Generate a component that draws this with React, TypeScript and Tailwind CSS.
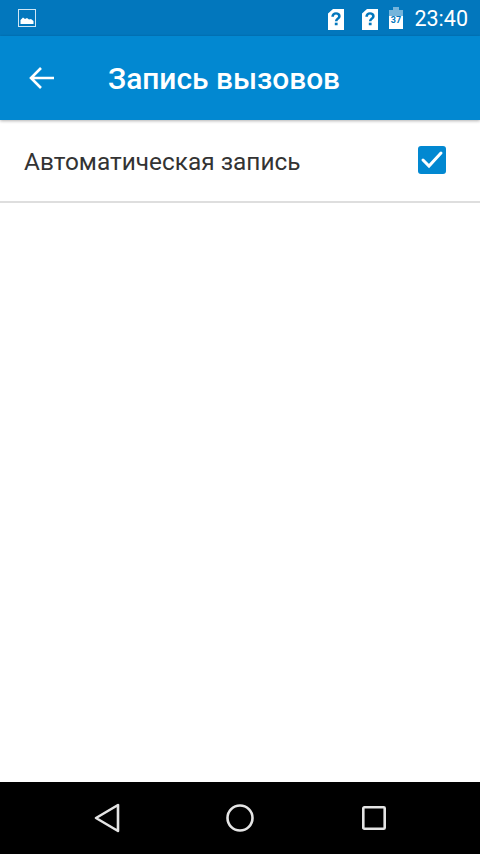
import React from "react";

function SimIcon() {
    return (
        <svg width="16" height="21" viewBox="0 0 16 23" preserveAspectRatio="none">
            <path d="M5 0H16V23H0V5Z" fill="#fff" />
            <path
                d="M4.6 8.4C4.6 6.2 6 4.8 8 4.8s3.4 1.4 3.4 3.2c0 2.6-3.2 2.6-3.2 5.4"
                fill="none"
                stroke="#0277bd"
                strokeWidth="2.6"
            />
            <rect x="6.8" y="15" width="2.8" height="2.8" fill="#0277bd" />
        </svg>
    );
}

function StatusBar() {
    return (
        <div className="h-9 bg-[#0277bd] flex items-center pl-[18px] pr-3 shrink-0">
            <svg width="18" height="18" viewBox="0 0 18 18">
                <rect x="0.5" y="0.5" width="17" height="17" fill="none" stroke="#cfe6f5" />
                <path d="M2.5 15V11L5 8.5L7 10L9 9L11 10.5L13 10L15.5 12V15Z" fill="#fff" />
            </svg>
            <div className="ml-auto flex items-center">
                <div className="mt-0.5 flex">
                    <SimIcon />
                </div>
                <div className="ml-[18px] mt-0.5 flex">
                    <SimIcon />
                </div>
                <svg className="ml-[11px]" width="14" height="22" viewBox="0 0 14 22">
                    <path d="M4 0H10V3H14V22H0V3H4Z" fill="#fff" fillOpacity="0.45" />
                    <path d="M0 9H14V22H0Z" fill="#fff" />
                    <text
                        x="7"
                        y="16"
                        textAnchor="middle"
                        fontSize="9"
                        fontWeight="700"
                        fontFamily="Roboto, sans-serif"
                        fill="#0277bd"
                    >
                        37
                    </text>
                </svg>
                <span className="ml-[11px] mt-0.5 text-[21.5px] leading-none text-white font-['Roboto',sans-serif]">
                    23:40
                </span>
            </div>
        </div>
    );
}

function CheckBox() {
    return (
        <svg width="28" height="28" viewBox="0 0 28 28">
            <rect width="28" height="28" rx="3" fill="#0288d1" />
            <path d="M5 14L11 20L23 7" fill="none" stroke="#fff" strokeWidth="3" strokeLinecap="round" />
        </svg>
    );
}

export default function App() {
    return (
        <div className="h-[854px] flex flex-col bg-white font-['Roboto',sans-serif]">
            <StatusBar />
            <header className="h-[84px] bg-[#0288d1] flex items-center pl-7 shrink-0 shadow-[0_1px_3px_rgba(0,0,0,0.3)] relative">
                <svg width="28" height="28" viewBox="0 0 28 28">
                    <path
                        d="M26 14H3M13 4L3 14L13 24"
                        fill="none"
                        stroke="#fff"
                        strokeWidth="2.6"
                    />
                </svg>
                <h1 className="ml-[52px] pt-0.5 text-[29.9px] font-medium text-white">Запись вызовов</h1>
            </header>
            <div className="h-[83px] flex items-center justify-between pl-6 pr-[34px] border-b-2 border-[#dedede] shrink-0">
                <span className="pt-[3px] text-[24.4px] text-[#333333]">Автоматическая запись</span>
                <div className="flex pb-px">
                    <CheckBox />
                </div>
            </div>
            <div className="flex-1" />
            <nav className="h-[72px] bg-black flex items-center justify-between pl-[94px] pr-[94px] shrink-0">
                <svg width="26" height="30" viewBox="0 0 26 30">
                    <path d="M24 2V28L2 15Z" fill="none" stroke="#e4e4e4" strokeWidth="2.6" strokeLinejoin="round" />
                </svg>
                <svg className="mr-0.5" width="28" height="28" viewBox="0 0 28 28">
                    <circle cx="14" cy="14" r="12.5" fill="none" stroke="#e4e4e4" strokeWidth="2.6" />
                </svg>
                <svg width="24" height="24" viewBox="0 0 24 24">
                    <rect x="1.3" y="1.3" width="21.4" height="21.4" rx="1" fill="none" stroke="#e4e4e4" strokeWidth="2.6" />
                </svg>
            </nav>
        </div>
    );
}
